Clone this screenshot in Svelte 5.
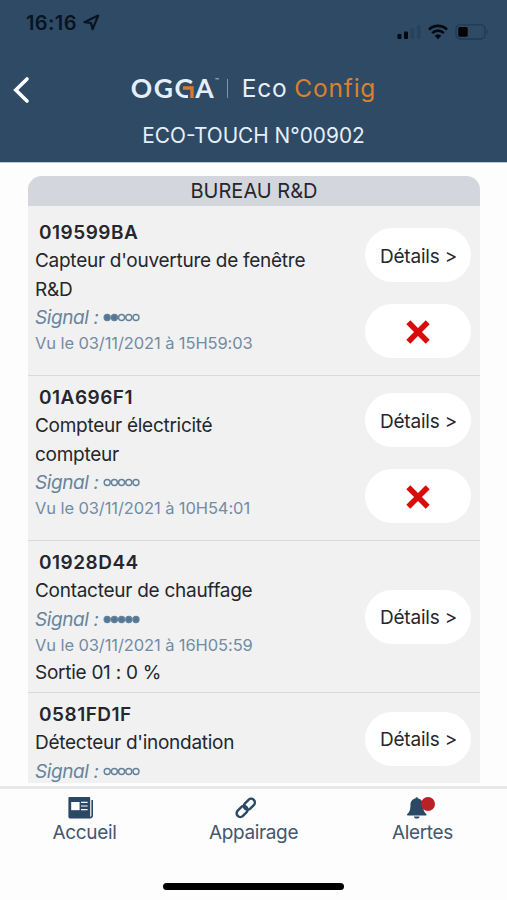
<script lang="ts">
type Device = {
  id: string;
  lines: string[];
  signal: number;
  seen?: string;
  output?: string;
  removable?: boolean;
};

const devices: Device[] = [
  {
    id: "019599BA",
    lines: ["Capteur d'ouverture de fenêtre", "R&D"],
    signal: 2,
    seen: "03/11/2021 à 15H59:03",
    removable: true,
  },
  {
    id: "01A696F1",
    lines: ["Compteur électricité", "compteur"],
    signal: 0,
    seen: "03/11/2021 à 10H54:01",
    removable: true,
  },
  {
    id: "01928D44",
    lines: ["Contacteur de chauffage"],
    signal: 5,
    seen: "03/11/2021 à 16H05:59",
    output: "Sortie 01 : 0 %",
  },
  {
    id: "0581FD1F",
    lines: ["Détecteur d'inondation"],
    signal: 0,
  },
];

const dots = [0, 1, 2, 3, 4];
</script>

<div class="app">
  <header class="header">
    <div class="status-bar">
      <div class="clock">
        <span>16:16</span>
        <svg width="17" height="17" viewBox="0 0 17 17">
          <path d="M1.4 8.2 15.2 1.6 9.6 15.2 8 9Z" fill="none" stroke="currentColor" stroke-width="2.2" stroke-linejoin="round" />
        </svg>
      </div>
      <div class="indicators">
        <svg width="24" height="16" viewBox="0 0 24 16">
          <rect x="0.5" y="10" width="4" height="5" rx="1" fill="#05090f" />
          <rect x="7" y="7.5" width="4" height="7.5" rx="1" fill="#05090f" />
          <rect x="13.5" y="4.5" width="3.6" height="10.5" rx="1" fill="#27425c" />
          <rect x="20" y="1.5" width="3.6" height="13.5" rx="1" fill="#27425c" />
        </svg>
        <svg width="20" height="16" viewBox="0 0 20 16">
          <g fill="none" stroke="#05090f" stroke-width="2.7">
            <path d="M1 5.6a12.8 12.8 0 0 1 18 0" />
            <path d="M4.2 9.1a8.2 8.2 0 0 1 11.6 0" />
          </g>
          <path d="M6.7 11.7a4.8 4.8 0 0 1 6.6 0L10 15.2Z" fill="#05090f" />
        </svg>
        <svg width="34" height="16" viewBox="0 0 34 16">
          <rect x="1" y="0.8" width="29" height="14.2" rx="4.2" fill="none" stroke="#203a52" stroke-width="1.3" />
          <rect x="3.3" y="3" width="9.4" height="9.8" rx="1.6" fill="#020408" />
          <path d="M31.6 5.2q2.2 2.7 0 5.4Z" fill="#203a52" />
        </svg>
      </div>
    </div>

    <div class="title-bar">
      <button class="back" aria-label="Retour">
        <svg width="18" height="28" viewBox="0 0 18 28">
          <path d="M15 3 3.8 14 15 25" fill="none" stroke="#fff" stroke-width="3.6" stroke-linecap="round" />
        </svg>
      </button>
      <div class="brand">
        <span class="ogga">OG<span class="accent">G<svg width="12" height="12" viewBox="0 0 12 12"><path d="M1 0H12V12H6V6H1Z" fill="#2e4a65" /><path d="M1 2H10V12" fill="none" stroke="#d97b26" stroke-width="3.4" /></svg></span>A</span>
        <span class="tm">™</span>
        <span class="divider"></span>
        <span class="eco">Eco</span>
        <span class="config">Config</span>
      </div>
    </div>
    <div class="unit">ECO-TOUCH N°00902</div>
  </header>

  <main class="content">
    <section class="card">
      <h2>BUREAU R&amp;D</h2>
      {#each devices as device}
        <article class="device">
          <div class="info">
            <div class="device-id">{device.id}</div>
            {#each device.lines as line}
              <div class="name">{line}</div>
            {/each}
            <div class="signal">
              <em>Signal :</em>
              <svg width="38" height="9" viewBox="0 0 38 9">
                {#each dots as dot}
                  <circle
                    cx={4.2 + dot * 7.2}
                    cy="4.5"
                    r="3"
                    fill={dot < device.signal ? "#527696" : "none"}
                    stroke="#628199"
                    stroke-width="1.4"
                  />
                {/each}
              </svg>
            </div>
            {#if device.seen}
              <div class="seen">Vu le {device.seen}</div>
            {/if}
            {#if device.output}
              <div class="output">{device.output}</div>
            {/if}
          </div>
          <div class="actions">
            <button class="pill">Détails &gt;</button>
            {#if device.removable}
              <button class="pill remove" aria-label="Supprimer">
                <svg width="26" height="26" viewBox="0 0 26 26">
                  <path d="M3.3 3.3 22.7 22.7M22.7 3.3 3.3 22.7" stroke="#d90c0c" stroke-width="5.6" />
                </svg>
              </button>
            {/if}
          </div>
        </article>
      {/each}
    </section>
  </main>

  <nav class="tabs">
    <a class="tab" href="#accueil">
      <svg width="26" height="22" viewBox="0 0 26 22">
        <path d="M1.4 0H21.2a1 1 0 0 1 1 1V21.4H2a1.6 1.6 0 0 1-1.6-1.6V1a1 1 0 0 1 1-1Z" fill="#2b4864" />
        <path d="M24.2 3V18.8q0 1.6-2.4 2" fill="none" stroke="#2b4864" stroke-width="1.6" />
        <rect x="3.2" y="5" width="8.4" height="8.2" fill="#fff" />
        <path d="M13 5.4H19.6M13 9H19.6M13 12.7H19.6" stroke="#fff" stroke-width="1.2" />
      </svg>
      <span>Accueil</span>
    </a>
    <a class="tab" href="#appairage">
      <svg width="24" height="22" viewBox="0 0 24 22">
        <g fill="none" stroke="#2b4864" stroke-width="2.4">
          <rect x="-6.2" y="-3.7" width="12.4" height="7.4" rx="3.7" transform="translate(15.4 7.2) rotate(-45)" />
          <rect x="-6.2" y="-3.7" width="12.4" height="7.4" rx="3.7" transform="translate(8.1 14.5) rotate(-45)" />
        </g>
      </svg>
      <span>Appairage</span>
    </a>
    <a class="tab" href="#alertes">
      <span class="bell">
        <svg width="20" height="22" viewBox="0 0 20 22">
          <path d="M9.7 0.2a1.3 1.3 0 0 1 1.3 1.2c3.4.5 5 3.2 5 6.2 0 5.4 1.2 7.4 3.3 9.5.5.5.2 1.5-.6 1.5H.8c-.8 0-1-1-.5-1.5 2.2-2.1 3.2-4.1 3.2-9.5 0-3 1.6-5.7 4.9-6.2A1.3 1.3 0 0 1 9.7.2Z" fill="#2b4864" />
          <path d="M7 19.5h5.5a2.75 2 0 0 1-5.5 0Z" fill="#2b4864" />
        </svg>
        <span class="badge"></span>
      </span>
      <span>Alertes</span>
    </a>
  </nav>
  <div class="home-indicator"><span></span></div>
</div>

<style>
:global(body) {
  background: #fdfdfd;
}

.app {
  display: flex;
  flex-direction: column;
  height: 900px;
  overflow: hidden;
  background: #fdfdfd;
  color: #25272c;
  font-family: Inter, "Liberation Sans", sans-serif;
  font-size: 19px;
}

button {
  border: 0;
  padding: 0;
  font: inherit;
  color: inherit;
  cursor: pointer;
}

svg {
  display: block;
  flex: none;
}

.header {
  flex: none;
  box-sizing: border-box;
  height: 163px;
  border-bottom: 1px solid #bdc9d4;
  background: #2e4a65;
  color: #e6eff9;
}

.status-bar {
  display: flex;
  justify-content: space-between;
  height: 64px;
  padding: 0 18px 0 26px;
}

.clock {
  display: flex;
  align-items: center;
  gap: 6px;
  height: 45px;
  color: #081422;
  font-size: 20px;
  font-weight: 600;
  letter-spacing: 0.4px;
}

.indicators {
  display: flex;
  gap: 7px;
  padding-top: 24px;
}

/* side columns keep the brand centred */
.title-bar {
  display: grid;
  grid-template-columns: 40px 1fr 40px;
  align-items: center;
  height: 52px;
}

.back {
  margin-left: 12px;
  background: none;
}

.brand {
  display: flex;
  align-items: center;
  justify-content: center;
  height: 34px;
  margin-bottom: 4px;
  font-size: 24.5px;
  line-height: 34px;
}

.ogga {
  font-family: Lato, "Liberation Sans", sans-serif;
  font-size: 26.5px;
  font-weight: 700;
  letter-spacing: 1.5px;
}

.accent {
  position: relative;
}

.accent svg {
  position: absolute;
  right: 1px;
  bottom: 6px;
}

.tm {
  align-self: flex-start;
  font-size: 6px;
  line-height: 19px;
}

.divider {
  width: 1px;
  height: 19px;
  margin: 0 14px 0 8px;
  background: #8095aa;
}

.eco {
  letter-spacing: 0.7px;
}

.config {
  margin-left: 7px;
  color: #d9812f;
  letter-spacing: 0.8px;
}

.unit {
  font-size: 20.8px;
  line-height: 40px;
  text-align: center;
}

.content {
  flex: none;
  height: 607px;
  padding: 13px 27px 0 28px;
  overflow: hidden;
}

.card {
  height: 607px;
  overflow: hidden;
  border-radius: 14px 14px 0 0;
  background: #f1f1f2;
}

h2 {
  box-sizing: border-box;
  height: 30px;
  margin: 0 0 5px;
  padding-top: 1px;
  background: #d4d6de;
  font-size: 20px;
  font-weight: 400;
  line-height: 29px;
  text-align: center;
}

.device {
  display: flex;
  justify-content: space-between;
  align-items: center;
  box-sizing: border-box;
  min-height: 165px;
  padding: 0 9px 0 7px;
  border-bottom: 1px solid #d9dadc;
}

.device:nth-of-type(3) {
  min-height: 152px;
}

.device:nth-of-type(4) {
  min-height: 90px;
}

.info {
  align-self: flex-start;
  padding-top: 8px;
  letter-spacing: -0.27px;
  white-space: nowrap;
}

.device-id {
  padding-left: 4px;
  font-weight: 600;
  letter-spacing: 0.5px;
  line-height: 28px;
}

.name {
  line-height: 28.5px;
}

.signal {
  display: flex;
  align-items: center;
  gap: 4px;
  height: 27px;
  color: #66849d;
  letter-spacing: -0.4px;
}

.seen {
  color: #718ca3;
  font-size: 16.5px;
  letter-spacing: -0.1px;
  line-height: 25px;
}

.output {
  line-height: 29px;
}

.actions {
  display: flex;
  flex-direction: column;
  gap: 22px;
}

.pill {
  display: flex;
  align-items: center;
  justify-content: center;
  box-sizing: border-box;
  width: 106px;
  height: 54px;
  padding: 2px 0 0 1px;
  border-radius: 27px;
  background: #fff;
  letter-spacing: -0.2px;
}

.remove {
  padding: 1px 0 0;
}

.tabs {
  display: flex;
  flex: none;
  justify-content: space-between;
  height: 80px;
  margin-top: 3px;
  border-top: 3px solid #e8e9ea;
}

.tab {
  display: flex;
  flex: 1;
  flex-direction: column;
  align-items: center;
  padding-top: 8px;
  color: #44576c;
  font-size: 19px;
  letter-spacing: -0.35px;
  line-height: 28px;
  text-decoration: none;
}

.tab:first-child svg {
  margin-right: 8px;
}

.tab:nth-child(2) svg {
  margin-right: 15px;
}

.bell {
  position: relative;
  margin-right: 11px;
}

.badge {
  position: absolute;
  top: 0;
  right: -8px;
  width: 14px;
  height: 14px;
  border-radius: 50%;
  background: #b82125;
}

.home-indicator {
  display: flex;
  flex: 1;
  align-items: center;
  justify-content: center;
  padding-top: 4px;
}

.home-indicator span {
  width: 181px;
  height: 7px;
  border-radius: 4px;
  background: #000;
}
</style>
